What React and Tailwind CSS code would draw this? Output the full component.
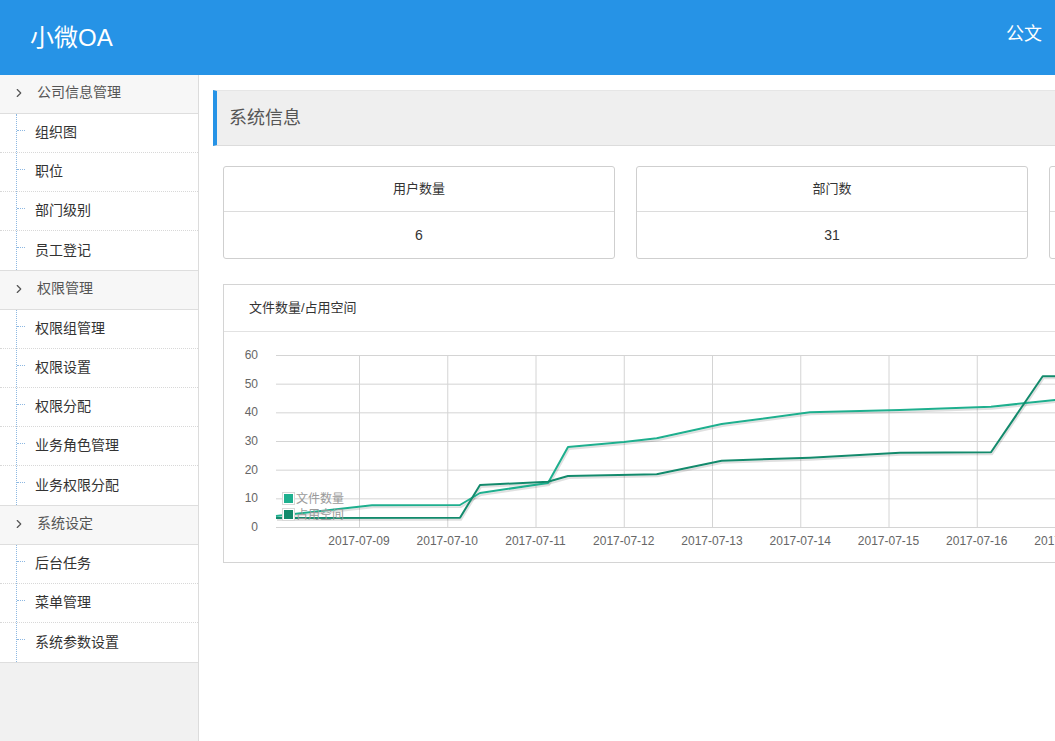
import { ChevronRight } from 'lucide-react';

const menu = [
  { title: '公司信息管理', items: ['组织图', '职位', '部门级别', '员工登记'] },
  { title: '权限管理', items: ['权限组管理', '权限设置', '权限分配', '业务角色管理', '业务权限分配'] },
  { title: '系统设定', items: ['后台任务', '菜单管理', '系统参数设置'] },
];

const stats = [
  { label: '用户数量', value: '6' },
  { label: '部门数', value: '31' },
  { label: '文件数量', value: '12' },
];

// chart origin in page coords: x 224, y 332
const OX = 224;
const OY = 332;
const p = (pts) => pts.map(([x, y]) => `${x - OX},${y - OY}`).join(' ');

const fileLine = [
  [276, 516], [372, 505.3], [460, 505], [480, 493], [548, 483], [568, 447], [624, 442],
  [656.7, 438.3], [721.7, 424], [810, 412.3], [900, 410], [991, 406.7], [1055, 400], [1090, 396],
];
const spaceLine = [
  [276, 518], [460, 517.7], [480, 485], [548, 481.7], [568, 476], [656.7, 474.3],
  [721.7, 460.7], [810, 457.7], [900, 452.7], [991, 452.3], [1042.7, 376.3], [1090, 376],
];

const yTicks = [60, 50, 40, 30, 20, 10, 0];
const dates = ['2017-07-09', '2017-07-10', '2017-07-11', '2017-07-12', '2017-07-13', '2017-07-14', '2017-07-15', '2017-07-16', '2017-07-17'];

function Chart() {
  const yOf = (v) => 527 - (v / 60) * 172 - OY;
  const xOf = (i) => 359 + i * 88.25 - OX;
  return (
    <svg width="1216" height="230" className="block" style={{ fontFamily: '"Liberation Sans", "Noto Sans CJK SC", sans-serif' }}>
      {yTicks.map((v) => (
        <g key={v}>
          <line x1={276 - OX} x2={1216} y1={yOf(v) + 0.5} y2={yOf(v) + 0.5} stroke="#d4d4d4" />
          <text x={258 - OX} y={yOf(v) + 4} textAnchor="end" fontSize="12" fill="#666">{v}</text>
        </g>
      ))}
      {dates.map((d, i) => (
        <g key={d}>
          <line x1={xOf(i) + 0.5} x2={xOf(i) + 0.5} y1={yOf(60)} y2={yOf(0)} stroke="#d4d4d4" />
          <text x={xOf(i)} y={545 - OY} textAnchor="middle" fontSize="12" fill="#666">{d}</text>
        </g>
      ))}
      <polyline points={p(fileLine)} fill="none" stroke="rgba(0,0,0,0.12)" strokeWidth="2" transform="translate(1,2)" />
      <polyline points={p(spaceLine)} fill="none" stroke="rgba(0,0,0,0.12)" strokeWidth="2" transform="translate(1,2)" />
      <polyline points={p(fileLine)} fill="none" stroke="#1eaf8e" strokeWidth="2" strokeLinejoin="round" />
      <polyline points={p(spaceLine)} fill="none" stroke="#138a6c" strokeWidth="2" strokeLinejoin="round" />
      <rect x={282.5 - OX} y={492.5 - OY} width="12" height="12" fill="#fff" stroke="#d8d8d8" strokeWidth="1" />
      <rect x={284 - OX} y={494 - OY} width="9" height="9" fill="#1eaf8e" />
      <text x={296 - OX} y={503 - OY} fontSize="12" fill="#9a9a9a">文件数量</text>
      <rect x={282.5 - OX} y={508.5 - OY} width="12" height="12" fill="#fff" stroke="#d8d8d8" strokeWidth="1" />
      <rect x={284 - OX} y={510 - OY} width="9" height="9" fill="#138a6c" />
      <text x={296 - OX} y={519 - OY} fontSize="12" fill="#9a9a9a">占用空间</text>
    </svg>
  );
}

export default function App() {
  return (
    <div className="h-screen w-full overflow-hidden bg-white flex flex-col" style={{ fontFamily: '"Liberation Sans", "Noto Sans CJK SC", sans-serif' }}>
      {/* 顶部导航 */}
      <header className="h-[75px] shrink-0 bg-[#2693e6] flex items-center justify-between pl-[30px] pr-[13px]">
        <h1 className="text-[24px] text-white">小微OA</h1>
        <span className="text-[18px] text-white -mt-[6px]">公文</span>
      </header>

      <div className="flex flex-1 min-h-0">
        {/* 侧边菜单 */}
        <aside className="w-[199px] shrink-0 bg-[#f1f1f1] border-r border-[#dcdcdc]">
          {menu.map((group) => (
            <div key={group.title}>
              <div className="h-[39px] bg-[#f7f7f7] border-b border-[#dedede] flex items-center pb-[3px] text-[14px] text-[#555]">
                <ChevronRight size={14} strokeWidth={2} className="ml-[12px] mr-[11px] text-[#555]" />
                {group.title}
              </div>
              <ul className="relative bg-white border-b border-[#dedede]">
                <div className="absolute left-[16px] top-0 bottom-0 border-l border-dotted border-[#8db8e2]"></div>
                {group.items.map((item, i) => (
                  <li
                    key={item}
                    className={`relative h-[39px] flex items-center pl-[35px] pb-[1px] text-[14px] text-[#333] ${i < group.items.length - 1 ? 'border-b border-dotted border-[#d8d8d8]' : ''}`}
                  >
                    <span className="absolute left-[17px] top-[16px] w-[8px] border-t border-dotted border-[#8db8e2]"></span>
                    {item}
                  </li>
                ))}
              </ul>
            </div>
          ))}
        </aside>

        {/* 主内容 */}
        <main className="flex-1 min-w-0 overflow-hidden pl-[14px] pt-[15px]">
          <div className="w-[1240px]">
            <div className="h-[56px] bg-[#efefef] border-l-4 border-[#2693e6] border-b border-b-[#dcdcdc] border-t border-t-[#e6e6e6] flex items-center pl-[12px]">
              <h2 className="text-[18px] text-[#555]">系统信息</h2>
            </div>

            <div className="ml-[10px] mt-[20px] flex gap-[21px]">
              {stats.map((s) => (
                <div key={s.label} className="w-[392px] h-[93px] border border-[#cfcfcf] rounded-[3px]">
                  <div className="h-[45px] border-b border-[#dcdcdc] flex items-center justify-center text-[13px] text-[#333]">{s.label}</div>
                  <div className="h-[46px] flex items-center justify-center text-[14px] text-[#333]">{s.value}</div>
                </div>
              ))}
            </div>

            <div className="ml-[10px] mt-[25px] w-[1218px] h-[279px] border border-[#d4d4d4]">
              <div className="h-[47px] border-b border-[#e2e2e2] flex items-center pl-[25px] text-[13px] text-[#333]">文件数量/占用空间</div>
              <Chart />
            </div>
          </div>
        </main>
      </div>
    </div>
  );
}
